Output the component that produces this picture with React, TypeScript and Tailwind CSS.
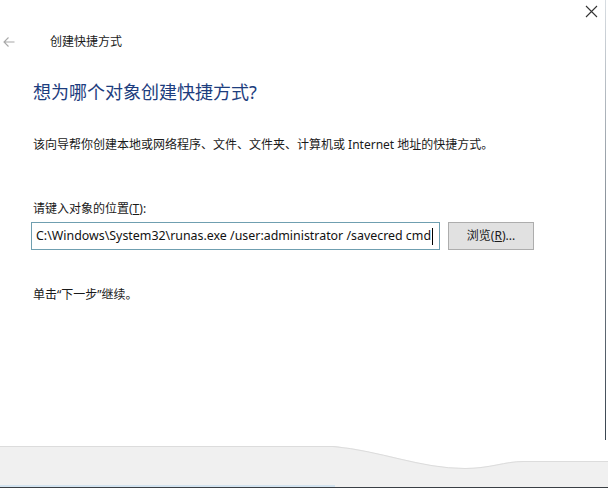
import React from "react";

const cjk = { fontFamily: '"Noto Sans", "Noto Sans CJK SC", sans-serif' };

export default function App() {
  return (
    <div
      className="relative w-[608px] h-[488px] bg-white overflow-hidden flex flex-col text-[#1a1a1a]"
      style={cjk}
    >
      {/* close */}
      <svg className="absolute left-[585px] top-[5px]" width="13" height="13" viewBox="0 0 13 13">
        <path d="M1 1 L12 12 M12 1 L1 12" stroke="#333" strokeWidth="1.1" fill="none" />
      </svg>
      {/* right edge */}
      <div className="absolute left-[605px] top-0 w-[1px] h-[440px] bg-gradient-to-b from-[#d8dde2] to-[#39444f]" />

      {/* header */}
      <div className="mt-[32px] h-[20px] flex items-center">
        <svg className="ml-[3px]" width="12" height="12" viewBox="0 0 12 12">
          <path d="M11.5 6 H1 M5.5 1.5 L1 6 L5.5 10.5" stroke="#a8a8a8" strokeWidth="1.1" fill="none" />
        </svg>
        <span className="ml-[35px] text-[12px] leading-[20px]">创建快捷方式</span>
      </div>

      <div className="ml-[33px] mt-[28px] text-[18px] leading-[24px] text-[#1d3d7e]">
        想为哪个对象创建快捷方式?
      </div>

      <div className="ml-[33px] mt-[32px] text-[12px] leading-[18px]">
        该向导帮你创建本地或网络程序、文件、文件夹、计算机或 Internet 地址的快捷方式。
      </div>

      <div className="ml-[33px] mt-[46px] text-[12px] leading-[18px]">
        请键入对象的位置(<span className="underline">T</span>):
      </div>

      <div className="ml-[31px] mt-[4px] flex items-center gap-[8px]">
        <div className="w-[409px] h-[28px] border border-[#6f9fb0] flex items-center pl-[4px] text-[12.4px] text-[#111] whitespace-nowrap overflow-hidden">
          <span>C:\Windows\System32\runas.exe /user:administrator /savecred cmd</span>
          <span className="ml-[1px] w-[1px] h-[17px] bg-black shrink-0" />
        </div>
        <div className="w-[86px] h-[28px] border border-[#adadad] bg-[#e1e1e1] flex items-center justify-center text-[12px]">
          浏览(<span className="underline">R</span>)...
        </div>
      </div>

      <div className="ml-[33px] mt-[36px] text-[12px] leading-[18px]">单击“下一步”继续。</div>

      <div className="flex-1" />

      {/* footer */}
      <div className="relative h-[42px] bg-[#f0f0f0] border-t border-[#dcdcdc]">
        <svg className="absolute left-0 top-[-1px]" width="608" height="30" viewBox="0 0 608 30">
          <path
            d="M333 0 C 380 4, 420 22, 465 22 C 490 22, 505 15, 523 15 L 608 15 L 608 0 Z"
            fill="#ffffff"
          />
          <path
            d="M333 0.5 C 380 4.5, 420 22.5, 465 22.5 C 490 22.5, 505 15.5, 523 15.5 L 608 15.5"
            stroke="#dcdcdc"
            strokeWidth="1"
            fill="none"
          />
        </svg>
        <div className="absolute left-0 bottom-[1px] w-[335px] h-[2px] bg-[#d3e3ef]" />
        <div className="absolute left-0 bottom-0 w-full h-[1px] bg-[#3a3f44]" />
      </div>
    </div>
  );
}
